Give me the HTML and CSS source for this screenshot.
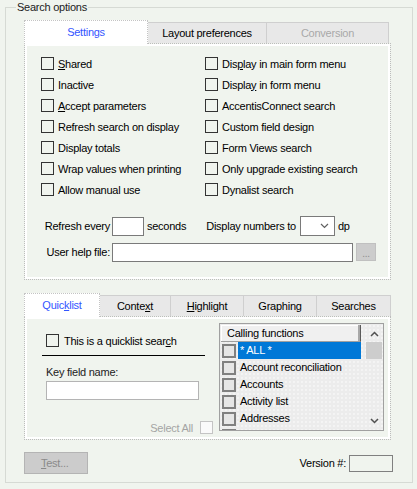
FILE: index.html
```html
<!DOCTYPE html>
<html>
<head>
<meta charset="utf-8">
<link rel="stylesheet" href="styles.css">
</head>
<body>
<fieldset class="group">
  <legend class="group-title">Search options</legend>
  <div class="group-body">
    <div class="tabs">
      <div class="tab tab-active" style="width:124px">Settings</div>
      <div class="tab" style="width:119px">Layout preferences</div>
      <div class="tab tab-disabled" style="width:122px">Conversion</div>
    </div>
    <div class="panel panel-settings">
      <div class="checks">
        <label class="check"><span class="box"></span><span><u>S</u>hared</span></label>
        <label class="check"><span class="box"></span><span>Dis<u>p</u>lay in main form menu</span></label>
        <label class="check"><span class="box"></span><span>Inactive</span></label>
        <label class="check"><span class="box"></span><span>Displa<u>y</u> in form menu</span></label>
        <label class="check"><span class="box"></span><span><u>A</u>ccept parameters</span></label>
        <label class="check"><span class="box"></span><span>AccentisConnect search</span></label>
        <label class="check"><span class="box"></span><span>Refresh search on display</span></label>
        <label class="check"><span class="box"></span><span>Custom field design</span></label>
        <label class="check"><span class="box"></span><span>Display totals</span></label>
        <label class="check"><span class="box"></span><span>Form Views search</span></label>
        <label class="check"><span class="box"></span><span>Wrap values when printing</span></label>
        <label class="check"><span class="box"></span><span>Only upgrade existing search</span></label>
        <label class="check"><span class="box"></span><span>Allow manual use</span></label>
        <label class="check"><span class="box"></span><span>Dynalist search</span></label>
      </div>
      <div class="field-row row-refresh">
        <span class="field-label">Refresh every</span>
        <span class="input input-refresh"></span>
        <span>seconds</span>
        <span class="label-dp">Display numbers to</span>
        <span class="select">
          <svg class="chev" width="9" height="6" viewBox="0 0 9 6"><path d="M1 1 L4.5 4.5 L8 1" fill="none" stroke="#606060" stroke-width="1.2"/></svg>
        </span>
        <span>dp</span>
      </div>
      <div class="field-row row-help">
        <span class="field-label">User help file:</span>
        <span class="input input-help"></span>
        <span class="btn-browse">...</span>
      </div>
    </div>

    <div class="tabs tabs-bottom">
      <div class="tab tab-active" style="width:76px"><span>Quic<u>k</u>list</span></div>
      <div class="tab" style="width:71px"><span>Conte<u>x</u>t</span></div>
      <div class="tab" style="width:73px"><span><u>H</u>ighlight</span></div>
      <div class="tab" style="width:73px">Graphing</div>
      <div class="tab" style="width:74px">Searches</div>
    </div>
    <div class="panel panel-quick">
      <div class="ql-left">
        <label class="check ql-check"><span class="box"></span><span>This is a quicklist sear<u>c</u>h</span></label>
        <div class="rule"></div>
        <div class="key-label">Key field name:</div>
        <span class="input input-key"></span>
        <div class="select-all">
          <span>Select All</span>
          <span class="box box-light"></span>
        </div>
      </div>
      <div class="list">
        <div class="list-main">
          <div class="list-header">Calling functions</div>
          <div class="list-row"><span class="lbox"></span><span class="ltext ltext-sel">* ALL *</span></div>
          <div class="list-row"><span class="lbox"></span><span class="ltext">Account reconciliation</span></div>
          <div class="list-row"><span class="lbox"></span><span class="ltext">Accounts</span></div>
          <div class="list-row"><span class="lbox"></span><span class="ltext">Activity list</span></div>
          <div class="list-row"><span class="lbox"></span><span class="ltext">Addresses</span></div>
          <div class="list-row"><span class="lbox"></span><span class="ltext"></span></div>
        </div>
        <div class="scroll">
          <div class="scroll-btn">
            <svg width="9" height="6" viewBox="0 0 9 6"><path d="M1 5 L4.5 1.5 L8 5" fill="none" stroke="#505050" stroke-width="1.5"/></svg>
          </div>
          <div class="scroll-thumb"></div>
          <div class="scroll-track"></div>
          <div class="scroll-btn">
            <svg width="9" height="6" viewBox="0 0 9 6"><path d="M1 1 L4.5 4.5 L8 1" fill="none" stroke="#505050" stroke-width="1.5"/></svg>
          </div>
        </div>
      </div>
    </div>

    <div class="footer">
      <span class="btn-test"><u>T</u>est...</span>
      <div class="version">
        <span>Version #:</span>
        <span class="input input-version"></span>
      </div>
    </div>
  </div>
</fieldset>
</body>
</html>
```
FILE: styles.css
```css
html, body {
  margin: 0;
  padding: 0;
}
body {
  width: 417px;
  height: 489px;
  background: #f0f4ee;
  font-family: "Liberation Sans", Arial, sans-serif;
  font-size: 11px;
  letter-spacing: -0.25px;
  color: #000;
  overflow: hidden;
}
u { text-decoration: underline; text-underline-offset: 1px; }

.group {
  margin: 0 4px 0 5px;
  padding: 0;
  border: 1px solid #d6dad4;
  min-inline-size: 0;
  height: 483px;
  box-sizing: border-box;
}
.group-title {
  margin-left: 10px;
  padding: 0 1px;
  line-height: 14px;
  color: #222;
}
.group-body {
  padding: 6px 19px 8px 18px;
}

.tabs {
  display: flex;
  align-items: flex-end;
  height: 23px;
}
.tab {
  height: 21px;
  box-sizing: border-box;
  border: 1px solid #cfcfcf;
  border-bottom: none;
  border-left: none;
  background: #e8e8e8;
  display: flex;
  align-items: center;
  justify-content: center;
  color: #000;
}
.tab-active {
  height: 24px;
  margin-bottom: -1px;
  background: #fff;
  border: 1px dotted #c4c4c4;
  border-bottom: none;
  color: #3355ff;
  position: relative;
  z-index: 1;
  padding-bottom: 1px;
}
.tab-disabled { color: #a8a8a8; }

.panel {
  width: 367px;
  box-sizing: border-box;
  border: 1px dotted #bcbcbc;
  background: #f0f4ee;
  box-shadow: inset 0 0 0 2px #fff;
}
.panel-settings {
  height: 237px;
  padding: 9px 0 0 16px;
}
.checks {
  display: grid;
  grid-template-columns: 164px auto;
  grid-auto-rows: 21px;
}
.check {
  display: flex;
  align-items: center;
  gap: 4px;
  white-space: nowrap;
}
.box {
  width: 13px;
  height: 13px;
  box-sizing: border-box;
  border: 1px solid #333;
  flex: none;
}
.box-light {
  border-color: #c4c4c4;
  background: #fafafa;
}

.field-row {
  display: flex;
  align-items: center;
  gap: 3px;
  height: 20px;
}
.row-refresh { margin-top: 16px; }
.row-help { margin-top: 6px; }
.field-label {
  width: 69px;
  text-align: right;
  margin-right: -1px;
}
.input {
  display: block;
  height: 19px;
  box-sizing: border-box;
  background: #fff;
  border: 1px solid #7a7a7a;
}
.input-refresh { width: 32px; }
.input-help { width: 241px; }
.label-dp { margin-left: 17px; }
.select {
  width: 35px;
  height: 20px;
  box-sizing: border-box;
  background: #fff;
  border: 1px solid #7a7a7a;
  display: flex;
  align-items: center;
  justify-content: flex-end;
  padding-right: 5px;
  margin-left: 1px;
}
.btn-browse {
  width: 20px;
  height: 18px;
  box-sizing: border-box;
  background: #cccccc;
  border: 1px solid #c0c0c0;
  color: #8c8c8c;
  font-size: 10px;
  display: flex;
  align-items: flex-end;
  justify-content: center;
  line-height: 13px;
}

.tabs-bottom { margin-top: 13px; }

.panel-quick {
  height: 124px;
  display: flex;
  padding-left: 17px;
}
.ql-left {
  width: 171px;
  display: flex;
  flex-direction: column;
}
.ql-check {
  margin-top: 15px;
  height: 17px;
  padding-left: 4px;
  gap: 5px;
}
.rule {
  width: 163px;
  height: 1px;
  background: #000;
  margin-top: 6px;
}
.key-label {
  margin-top: 10px;
  line-height: 13px;
  padding-left: 4px;
  color: #222;
}
.input-key {
  width: 153px;
  margin-top: 2px;
  margin-left: 4px;
  border-color: #b4b4b4;
}
.select-all {
  margin-top: 21px;
  display: flex;
  justify-content: flex-end;
  align-items: center;
  gap: 7px;
  color: #a4a4a4;
  height: 13px;
}

.list {
  margin-left: 6px;
  margin-top: 6px;
  width: 165px;
  height: 108px;
  box-sizing: border-box;
  border: 1px solid #a0a0a0;
  padding: 1px 2px 1px 1px;
  display: flex;
  background-color: #ececec;
  background-image: radial-gradient(circle, rgba(255,255,255,0.9) 0.6px, transparent 0.8px);
  background-size: 4px 4px;
  overflow: hidden;
}
.list-main {
  width: 145px;
  flex: none;
}
.list-header {
  width: 140px;
  height: 17px;
  box-sizing: border-box;
  background: #f0f0f0;
  border-bottom: 1px solid #a0a0a0;
  border-right: 1px solid #5a5a5a;
  box-shadow: inset -2px 0 0 #a8a8a8, inset 1px 1px 0 #fff;
  padding-left: 6px;
  line-height: 16px;
}
.list-row {
  width: 140px;
  height: 17px;
  display: flex;
  align-items: center;
}
.lbox {
  width: 14px;
  height: 14px;
  box-sizing: border-box;
  border: 2px solid #808080;
  background: #e6e6e6;
  margin-left: 1px;
  flex: none;
}
.ltext {
  flex: 1;
  height: 17px;
  line-height: 17px;
  margin-left: 2px;
  padding-left: 2px;
  white-space: nowrap;
}
.ltext-sel {
  background: #0078d7;
  color: #fff;
}
.scroll {
  width: 16px;
  flex: none;
  display: flex;
  flex-direction: column;
}
.scroll-btn {
  height: 17px;
  display: flex;
  align-items: center;
  justify-content: center;
}
.scroll-thumb {
  height: 17px;
  background: #cdcdcd;
}
.scroll-track { flex: 1; }

.footer {
  width: 369px;
  margin-top: 12px;
  display: flex;
  justify-content: space-between;
  align-items: center;
}
.btn-test {
  width: 64px;
  height: 22px;
  box-sizing: border-box;
  background: #cccccc;
  border: 1px solid #b4b4b4;
  color: #8a8a8a;
  padding-left: 16px;
  line-height: 20px;
}
.version {
  display: flex;
  align-items: center;
  gap: 3px;
}
.input-version {
  width: 44px;
  height: 17px;
  background: transparent;
  border-color: #808080;
}
```
